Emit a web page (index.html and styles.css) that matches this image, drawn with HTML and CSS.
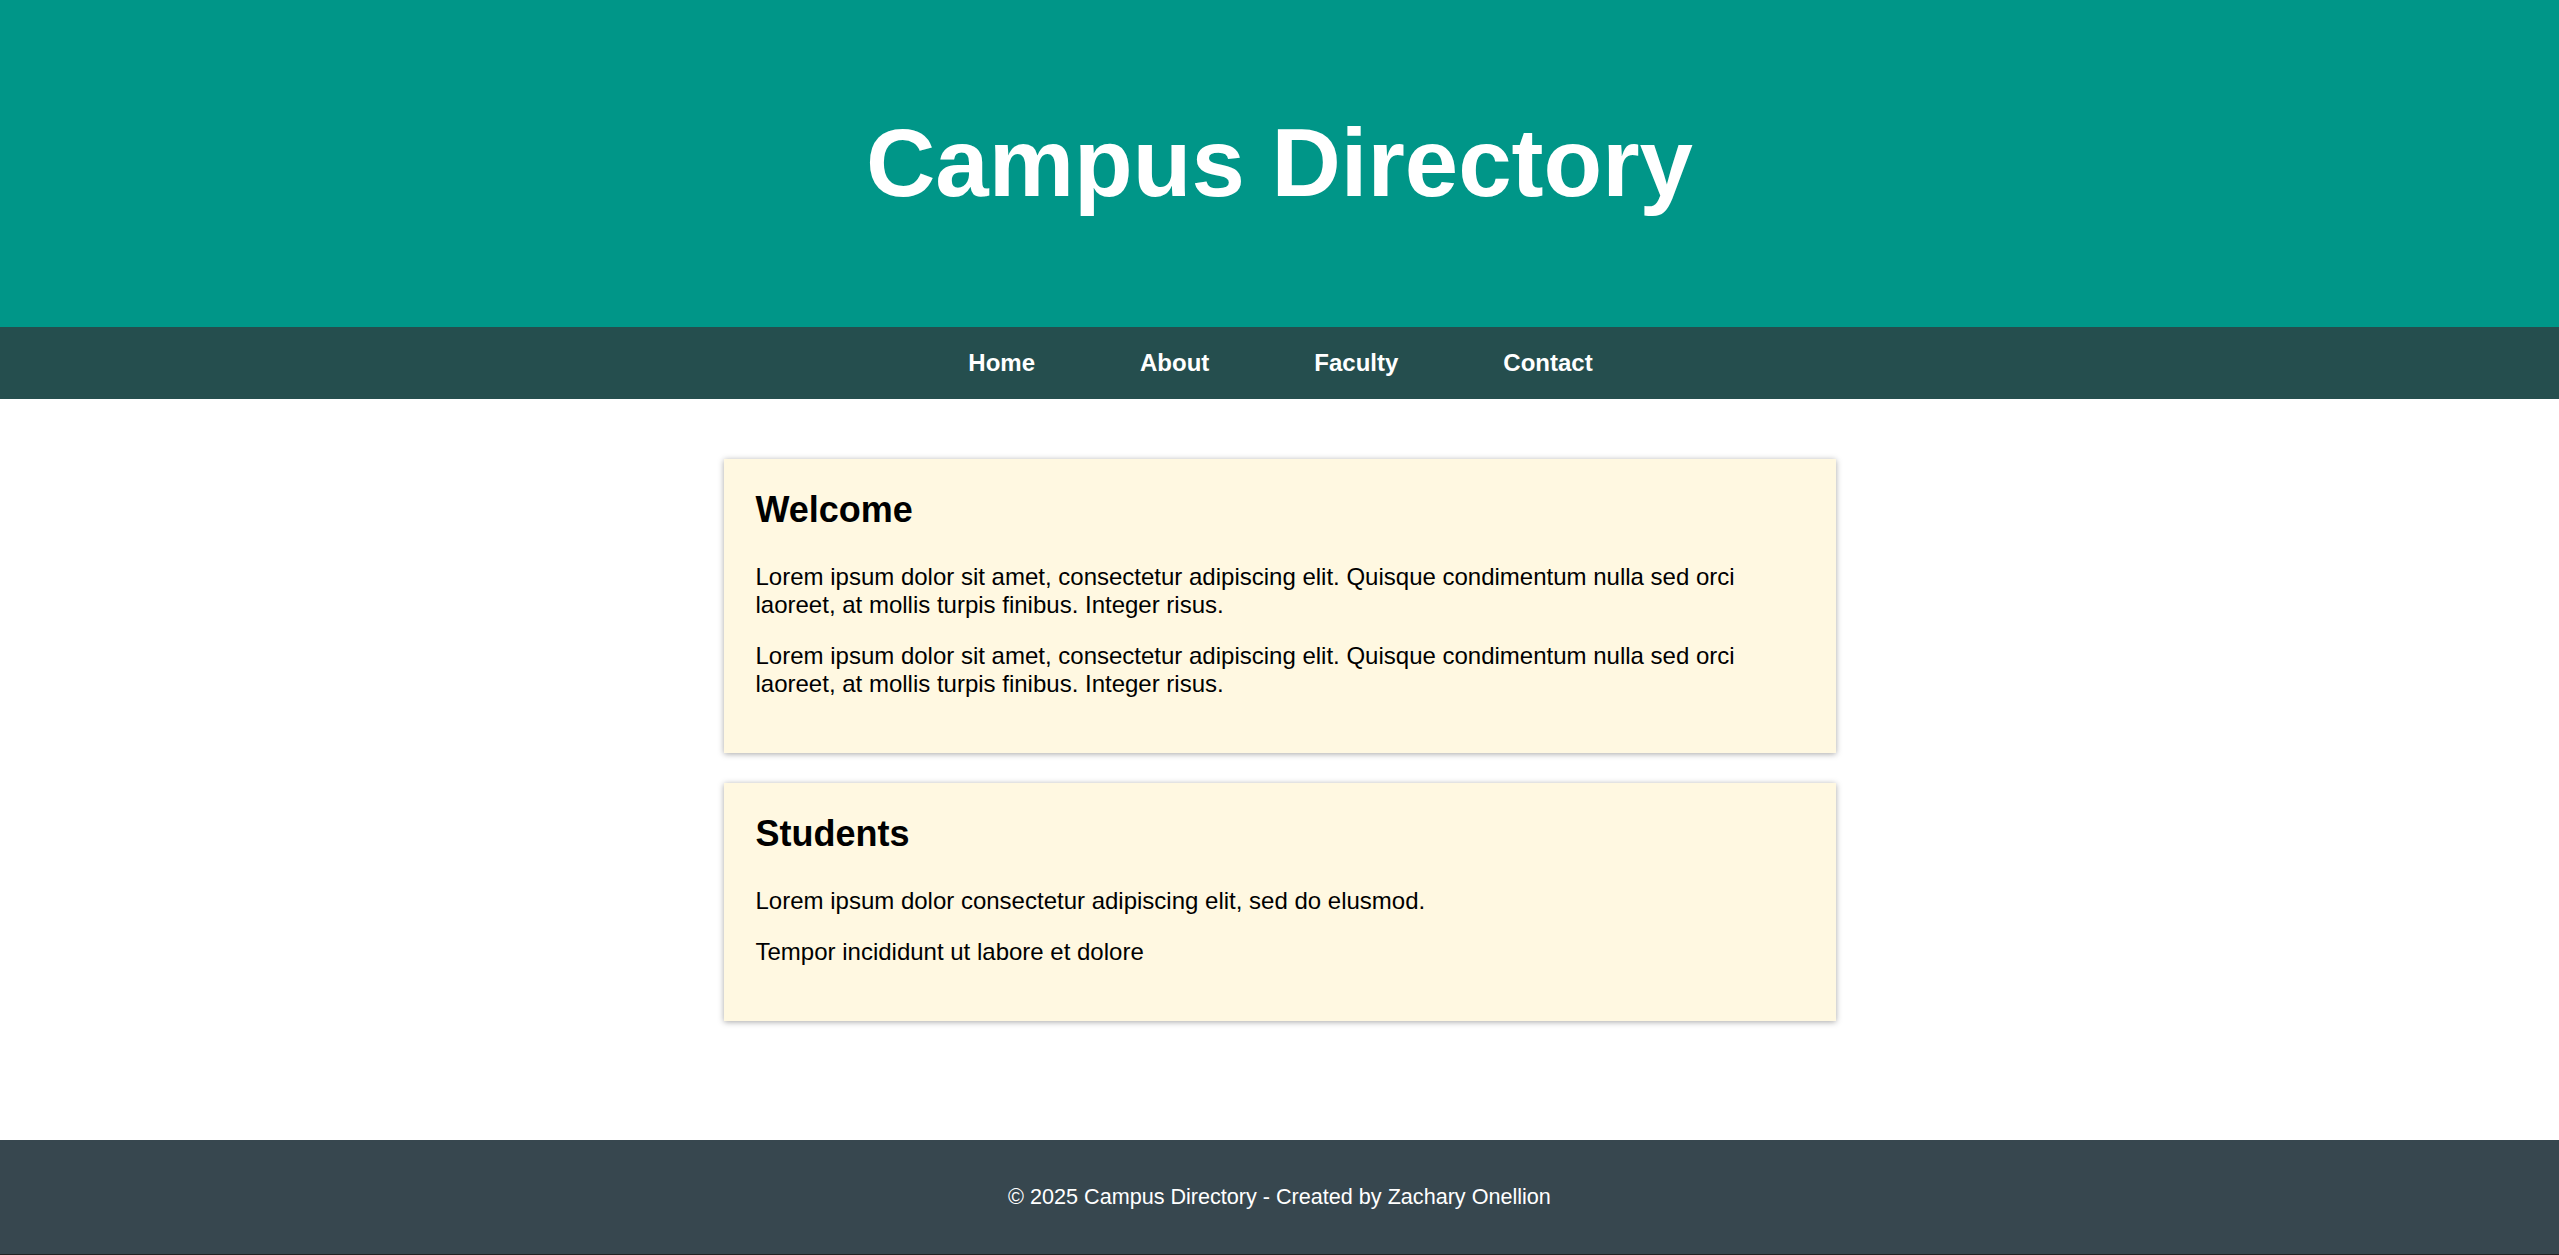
FILE: index.html
```html
<!DOCTYPE html>
<html lang="en">
<head>
<meta charset="utf-8">
<title>Campus Directory</title>
<link rel="stylesheet" href="styles.css">
</head>
<body>
<header class="site-header">
  <h1 class="site-title">Campus Directory</h1>
</header>
<nav class="site-nav">
  <a href="#" class="nav-link">Home</a>
  <a href="#" class="nav-link">About</a>
  <a href="#" class="nav-link">Faculty</a>
  <a href="#" class="nav-link">Contact</a>
</nav>
<main class="content">
  <section class="card">
    <h2 class="card-title">Welcome</h2>
    <p class="card-text">Lorem ipsum dolor sit amet, consectetur adipiscing elit. Quisque condimentum nulla sed orci laoreet, at mollis turpis finibus. Integer risus.</p>
    <p class="card-text">Lorem ipsum dolor sit amet, consectetur adipiscing elit. Quisque condimentum nulla sed orci laoreet, at mollis turpis finibus. Integer risus.</p>
  </section>
  <section class="card">
    <h2 class="card-title">Students</h2>
    <p class="card-text">Lorem ipsum dolor consectetur adipiscing elit, sed do elusmod.</p>
    <p class="card-text">Tempor incididunt ut labore et dolore</p>
  </section>
</main>
<footer class="site-footer">
  <p class="footer-text">&copy; 2025 Campus Directory - Created by Zachary Onellion</p>
</footer>
</body>
</html>
```
FILE: styles.css
```css
html {
  font-size: 24px;
}

body {
  margin: 0;
  min-height: 100vh;
  display: flex;
  flex-direction: column;
  font-family: "Liberation Sans", Arial, sans-serif;
  color: #000;
  background: #fff;
}

.site-header {
  background: #009688;
  padding: 108px 0 109px;
  text-align: center;
}

.site-title {
  margin: 0;
  font-size: 96px;
  line-height: 110px;
  font-weight: bold;
  color: #fff;
}

.site-nav {
  background: #254e4e;
  height: 72px;
  display: flex;
  justify-content: center;
  align-items: center;
  gap: 105px;
  padding-left: 2px;
}

.nav-link {
  color: #fff;
  text-decoration: none;
  font-weight: bold;
  font-size: 24px;
}

.content {
  flex: 1;
  padding: 60px 0;
}

.card {
  width: 1112px;
  box-sizing: border-box;
  margin: 0 auto 30px;
  padding: 30px 32px 32px;
  background: #fff8e1;
  box-shadow: 0 1px 6px rgba(0, 0, 0, 0.35);
}

.card-title {
  margin: 0 0 32px;
  font-size: 36px;
  font-weight: bold;
}

.card-text {
  margin: 0 0 23px;
  font-size: 24px;
}

.site-footer {
  background: #37474f;
  color: #fff;
  text-align: center;
  padding: 44px 0;
  border-bottom: 1px solid #222;
}

.footer-text {
  margin: 0;
  font-size: 21.6px;
}
```
